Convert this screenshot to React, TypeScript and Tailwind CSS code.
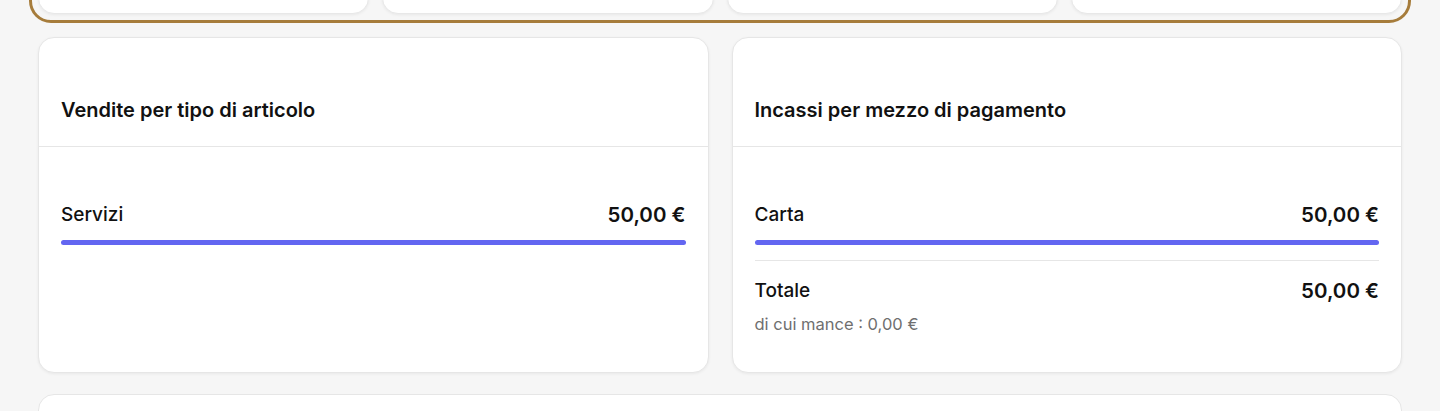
const amount = '50,00 €';

const Bar = () => (
  <div className="mt-[11px] h-[5px] w-full rounded-full bg-[#6366f1]" />
);

const Card = ({ title, children }: { title: string; children: React.ReactNode }) => (
  <div className="h-[336px] overflow-hidden rounded-2xl border border-[#e6e6e6] bg-white shadow-[0_1px_3px_rgba(0,0,0,0.06)]">
    <div className="border-b border-[#e6e6e6] px-[22px] pt-[58px] pb-[22px]">
      <h2 className="text-xl leading-7 font-semibold text-[#111111]">{title}</h2>
    </div>
    <div className="px-[22px] pt-[54px]">{children}</div>
  </div>
);

const Row = ({ label }: { label: string }) => (
  <div className="flex h-7 items-center justify-between text-[#111111]">
    <span className="text-[19px] font-medium">{label}</span>
    <span className="text-[20.5px] font-semibold">{amount}</span>
  </div>
);

export default function App() {
  return (
    <div
      className="min-h-screen overflow-hidden bg-[#f6f6f6] px-[38px]"
      style={{ fontFamily: 'Inter, "Noto Sans", sans-serif' }}
    >
      <div className="-mx-[9px] -mt-[95px] rounded-[22px] border-[3px] border-[#a67c3b] p-[6px]">
        <div className="grid grid-cols-4 gap-[13px]">
          {[0, 1, 2, 3].map((i) => (
            <div
              key={i}
              className="h-[100px] rounded-2xl border border-[#e8e8e8] bg-white shadow-[0_1px_3px_rgba(0,0,0,0.06)]"
            />
          ))}
        </div>
      </div>

      <div className="mt-[14px] grid grid-cols-2 gap-[23px]">
        <Card title="Vendite per tipo di articolo">
          <Row label="Servizi" />
          <Bar />
        </Card>
        <Card title="Incassi per mezzo di pagamento">
          <Row label="Carta" />
          <Bar />
          <div className="mt-[15px] border-t border-[#e6e6e6]" />
          <div className="mt-[16px]">
            <Row label="Totale" />
          </div>
          <p className="mt-[7px] text-[16.5px] leading-6 text-[#6f6f6f]">di cui mance : 0,00 €</p>
        </Card>
      </div>

      <div className="mt-[21px] h-[200px] rounded-2xl border border-[#e6e6e6] bg-white" />
    </div>
  );
}
